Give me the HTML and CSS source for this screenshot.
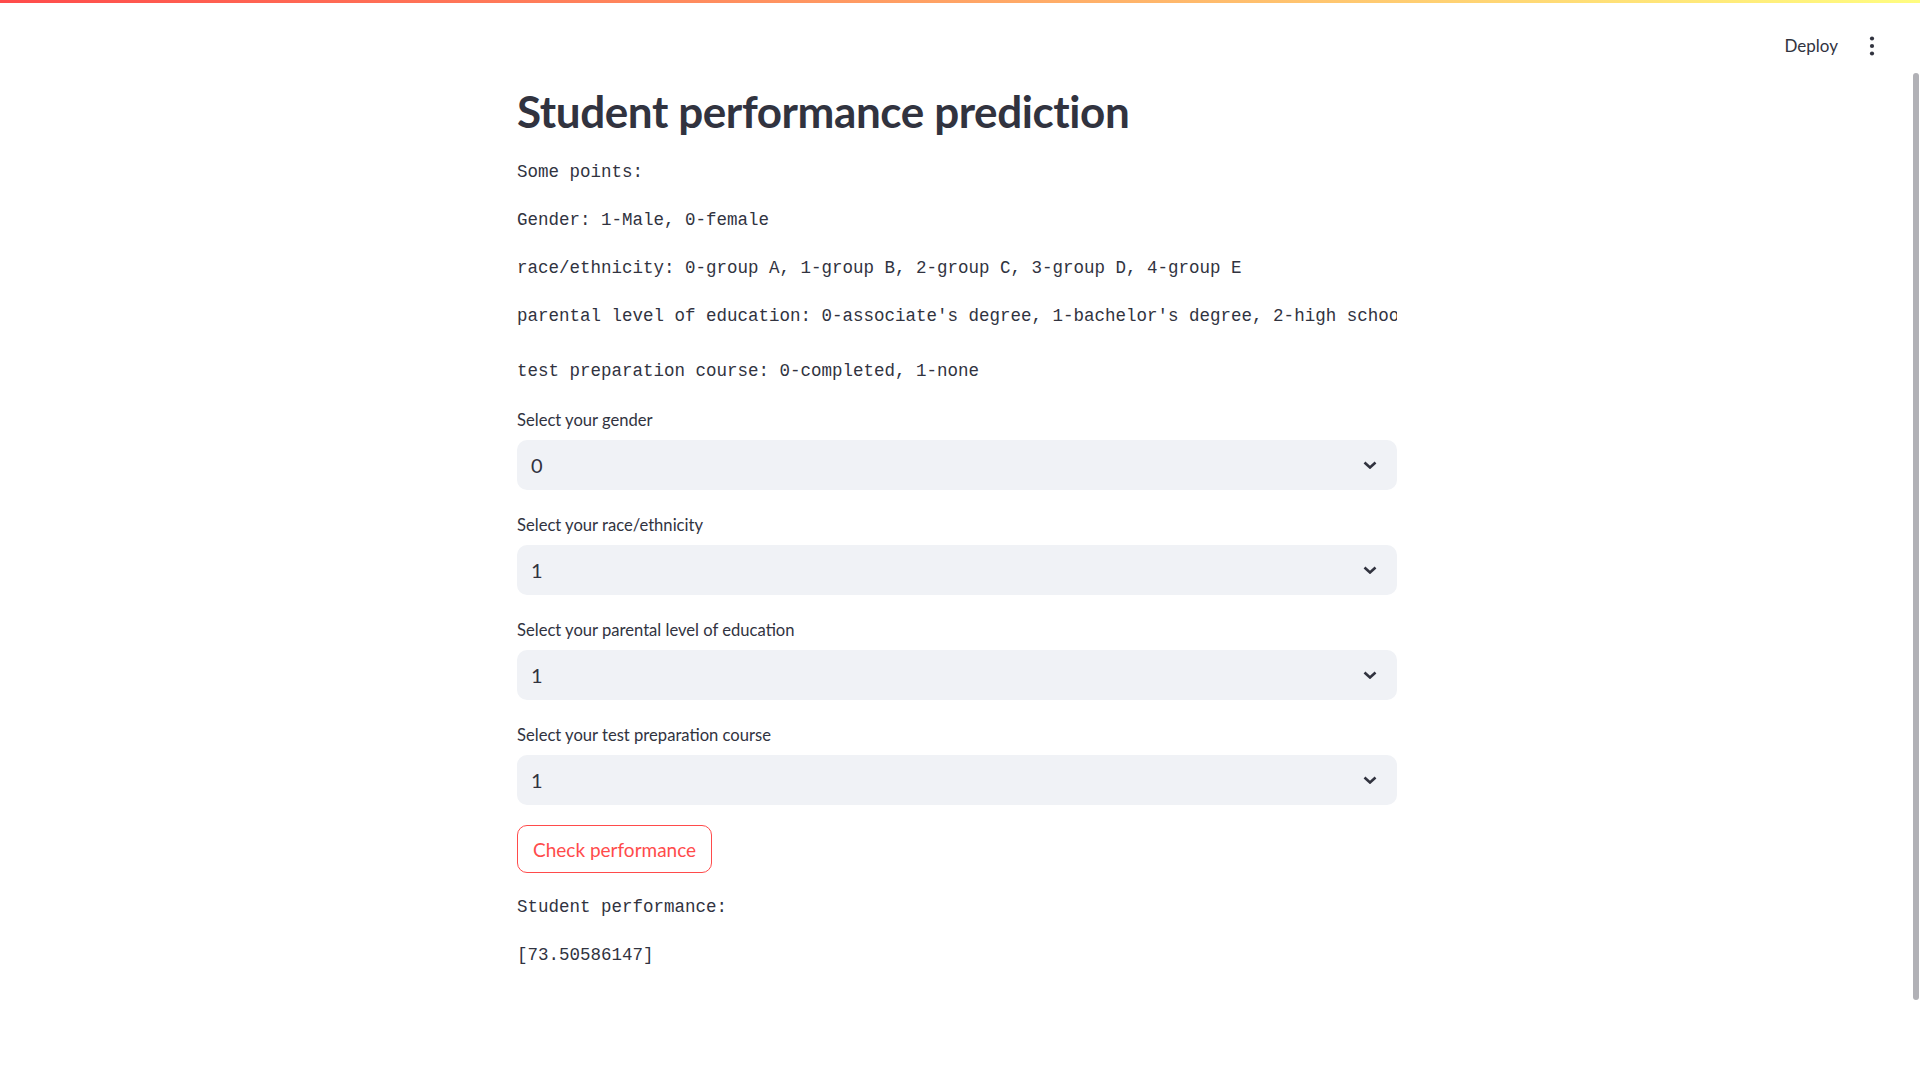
FILE: index.html
```html
<!DOCTYPE html>
<html lang="en">
<head>
<meta charset="utf-8">
<title>Student performance prediction</title>
<link rel="stylesheet" href="styles.css">
</head>
<body>
<div class="topbar"></div>
<header class="header">
  <span class="deploy">Deploy</span>
  <span class="kebab" aria-label="Main menu">
    <svg width="6" height="20" viewBox="0 0 6 20"><circle cx="3" cy="2.5" r="2.1" fill="#31333f"/><circle cx="3" cy="10" r="2.1" fill="#31333f"/><circle cx="3" cy="17.5" r="2.1" fill="#31333f"/></svg>
  </span>
</header>
<main class="main">
  <div class="block">
    <h1 class="title">Student performance prediction</h1>
    <div class="text">Some points:</div>
    <div class="text">Gender: 1-Male, 0-female</div>
    <div class="text">race/ethnicity: 0-group A, 1-group B, 2-group C, 3-group D, 4-group E</div>
    <div class="text text--scroll">parental level of education: 0-associate's degree, 1-bachelor's degree, 2-high school, 3-master's degree, 4-some college, 5-some high school</div>
    <div class="text">test preparation course: 0-completed, 1-none</div>

    <div class="field">
      <div class="label">Select your gender</div>
      <div class="select"><span class="value">0</span><svg class="chev" width="14" height="8" viewBox="0 0 14 8"><polyline points="1.5,1.5 7,6.5 12.5,1.5" fill="none" stroke="#31333f" stroke-width="2.6"/></svg></div>
    </div>
    <div class="field">
      <div class="label">Select your race/ethnicity</div>
      <div class="select"><span class="value">1</span><svg class="chev" width="14" height="8" viewBox="0 0 14 8"><polyline points="1.5,1.5 7,6.5 12.5,1.5" fill="none" stroke="#31333f" stroke-width="2.6"/></svg></div>
    </div>
    <div class="field">
      <div class="label">Select your parental level of education</div>
      <div class="select"><span class="value">1</span><svg class="chev" width="14" height="8" viewBox="0 0 14 8"><polyline points="1.5,1.5 7,6.5 12.5,1.5" fill="none" stroke="#31333f" stroke-width="2.6"/></svg></div>
    </div>
    <div class="field">
      <div class="label">Select your test preparation course</div>
      <div class="select"><span class="value">1</span><svg class="chev" width="14" height="8" viewBox="0 0 14 8"><polyline points="1.5,1.5 7,6.5 12.5,1.5" fill="none" stroke="#31333f" stroke-width="2.6"/></svg></div>
    </div>

    <button class="btn" type="button">Check performance</button>

    <div class="text">Student performance:</div>
    <div class="text">[73.50586147]</div>
  </div>
</main>
<div class="scrollthumb"></div>
</body>
</html>
```

FILE: styles.css
```css
html, body {
  margin: 0;
  padding: 0;
  background: #ffffff;
}

body {
  font-family: Lato, "Noto Sans", sans-serif;
  color: #31333f;
  min-height: 1080px;
}

.topbar {
  height: 3px;
  background: linear-gradient(90deg, #ff4b4b 0%, #fffd80 100%);
}

.header {
  display: flex;
  justify-content: flex-end;
  align-items: center;
  height: 85px;
  padding-right: 36px;
  gap: 22px;
}

.deploy {
  font-size: 17px;
  color: #31333f;
  line-height: 1;
}

.kebab {
  width: 24px;
  display: flex;
  justify-content: center;
  align-items: center;
}

.main {
  padding-right: 6px;
  padding-bottom: 160px;
}

.block {
  width: 880px;
  margin: 0 auto;
  display: flex;
  flex-direction: column;
  gap: 20px;
}

.title {
  margin: 0;
  height: 50px;
  font-size: 44px;
  line-height: 46px;
  font-weight: 700;
  color: #31333f;
  letter-spacing: -0.4px;
}

.text {
  font-family: "Liberation Mono", "DejaVu Sans Mono", monospace;
  font-size: 17.5px;
  line-height: 28px;
  white-space: pre;
  overflow: hidden;
  color: #31333f;
}

.text--scroll {
  padding-bottom: 7px;
}

.field {
  display: flex;
  flex-direction: column;
}

.label {
  height: 30px;
  margin-bottom: 5px;
  font-size: 16.6px;
  line-height: 30px;
  color: #31333f;
}

.select {
  height: 50px;
  box-sizing: border-box;
  background: #f0f2f6;
  border-radius: 10px;
  display: flex;
  align-items: center;
  justify-content: space-between;
  padding: 0 20px 0 14px;
}

.value {
  font-size: 20px;
  color: #31333f;
}

.chev {
  display: block;
}

.btn {
  align-self: flex-start;
  height: 48px;
  box-sizing: border-box;
  padding: 0 15px;
  background: #ffffff;
  border: 1px solid #ff4b4b;
  border-radius: 10px;
  color: #ff4b4b;
  font-family: Lato, "Noto Sans", sans-serif;
  font-size: 19px;
  cursor: pointer;
}

.scrollthumb {
  position: fixed;
  top: 73px;
  right: 1px;
  width: 6px;
  height: 927px;
  border-radius: 3px;
  background: #b1b1b6;
}
```
